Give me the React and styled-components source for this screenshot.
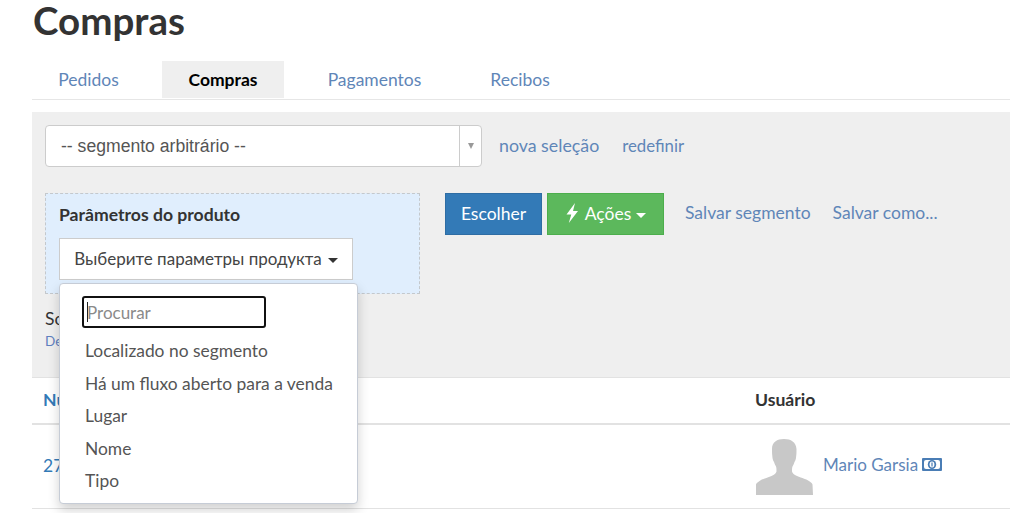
import React from "react";
import styled, { createGlobalStyle } from "styled-components";

const Global = createGlobalStyle`
  html, body {
    margin: 0;
    background: #fff;
    overflow: hidden;
  }
  body {
    font-family: Lato, "Open Sans", sans-serif;
    font-size: 17.5px;
    color: #333;
  }
  * { box-sizing: border-box; }
`;

const Page = styled.div`
  width: 1010px;
  height: 513px;
  padding-left: 32px;
  overflow: hidden;
`;

const Title = styled.h1`
  margin: 0;
  height: 61px;
  padding-left: 1px;
  font-size: 38.5px;
  line-height: 41px;
  font-weight: 700;
  color: #333;
`;

const Tabs = styled.nav`
  display: flex;
  height: 39px;
  border-bottom: 1px solid #e6e6e6;
`;

const Tab = styled.a`
  display: flex;
  align-items: center;
  justify-content: center;
  width: ${p => p.$width}px;
  margin-right: ${p => p.$gap || 0}px;
  height: 37px;
  font-size: 17.5px;
  color: ${p => (p.$active ? "#000" : "#5f86b8")};
  font-weight: ${p => (p.$active ? 700 : 400)};
  background: ${p => (p.$active ? "#efefef" : "transparent")};
`;

const Panel = styled.section`
  margin-top: 12px;
  height: 265px;
  padding: 13px;
  background: #efefef;
`;

const SegmentRow = styled.div`
  display: flex;
  align-items: center;
  height: 42px;
`;

const Select = styled.div`
  display: flex;
  align-items: stretch;
  width: 437px;
  height: 42px;
  background: #fff;
  border: 1px solid #ccc;
  border-radius: 4px;
`;

const SelectValue = styled.div`
  flex: 1;
  display: flex;
  align-items: center;
  padding-left: 15px;
  font-family: "Liberation Sans", Arial, sans-serif;
  font-size: 17.6px;
  color: #555;
`;

const SelectArrow = styled.div`
  width: 22px;
  display: flex;
  align-items: center;
  justify-content: center;
  border-left: 1px solid #ccc;

  &::after {
    content: "";
    border-top: 6px solid #999;
    border-left: 3.5px solid transparent;
    border-right: 3.5px solid transparent;
  }
`;

const TextLink = styled.a`
  margin-left: ${p => p.$gap}px;
  margin-bottom: 2px;
  font-size: ${p => p.$size || 17.5}px;
  color: #5f86b8;
  white-space: nowrap;
`;

const ActionLink = styled(TextLink)`
  line-height: 40px;
`;

const FilterRow = styled.div`
  display: flex;
  align-items: flex-start;
  margin-top: 26px;
`;

const ParamsBox = styled.div`
  position: relative;
  width: 375px;
  height: 101px;
  padding: 11px 13px;
  background: #e0eefd;
  border: 1px dashed #c4c8cc;
`;

const ParamsLabel = styled.div`
  font-size: 17.6px;
  line-height: 20px;
  font-weight: 700;
  color: #333;
`;

const Caret = styled.span`
  display: inline-block;
  margin-left: ${p => p.$gap || 6}px;
  vertical-align: middle;
  border-top: 5px solid ${p => p.$color || "#333"};
  border-left: 5px solid transparent;
  border-right: 5px solid transparent;
`;

const ParamsButton = styled.button`
  display: block;
  margin-top: 13px;
  width: 294px;
  height: 42px;
  padding: 0 0 2px;
  background: #fff;
  border: 1px solid #ccc;
  font: inherit;
  font-size: 17px;
  color: #444;
  white-space: nowrap;
`;

const Dropdown = styled.div`
  position: absolute;
  top: 89px;
  left: 13px;
  z-index: 5;
  width: 299px;
  height: 221px;
  padding: 12px 0 0 25px;
  background: #fff;
  border: 1px solid #c6ccd6;
  border-radius: 4px;
  box-shadow: 0 6px 12px rgba(0, 0, 0, 0.18);
`;

const SearchBox = styled.div`
  display: flex;
  align-items: center;
  width: 184px;
  height: 32px;
  margin-left: -3px;
  padding-left: 3px;
  border: 2px solid #111;
  border-radius: 3px;
  font-size: 17px;
  color: #8a8a8a;

  &::before {
    content: "";
    width: 1px;
    height: 20px;
    margin-right: -1px;
    background: #222;
  }
`;

const Options = styled.ul`
  margin: 7px 0 0;
  padding: 0;
  list-style: none;
`;

const Option = styled.li`
  height: 32.6px;
  line-height: 32.6px;
  font-size: 17.4px;
  color: #555;
  white-space: nowrap;
`;

const ActionButton = styled.button`
  display: flex;
  align-items: center;
  justify-content: center;
  gap: ${p => p.$inner || 0}px;
  width: ${p => p.$width}px;
  height: 42px;
  margin-left: ${p => p.$gap}px;
  padding: 0 0 2px;
  color: #fff;
  font: inherit;
  font-size: 17.5px;
  background: ${p => p.$bg};
  border: 1px solid ${p => p.$border};
`;

const Selection = styled.div`
  margin-top: 13px;
  font-size: 17.5px;
  line-height: 24px;
`;

const ClearLink = styled.a`
  display: block;
  font-size: 13.5px;
  line-height: 20px;
  color: #5f7fc0;
`;

const Row = styled.div`
  display: grid;
  grid-template-columns: 712px 1fr;
  align-items: center;
  height: ${p => p.$height}px;
  padding-left: 11px;
  border-top: ${p => p.$top || 0}px solid #e2e2e2;
  border-bottom: ${p => p.$line}px solid #e2e2e2;
`;

const HeadCell = styled.div`
  font-size: 17.6px;
  font-weight: 700;
  padding-bottom: 2px;
  color: ${p => p.$color || "#333"};
`;

const NumberCell = styled.a`
  font-size: 17.5px;
  padding-bottom: 3px;
  color: #337ab7;
`;

const UserCell = styled.div`
  display: flex;
  align-items: center;
  font-size: 17px;
  color: #5f86b8;
`;

const UserName = styled.span`
  margin: 0 4px 5px 9px;
`;

const MoneyWrap = styled.span`
  display: flex;
  margin-bottom: 5px;
`;

const Avatar = () => (
  <svg width="59" height="56" viewBox="0 0 59 56" fill="#c8c8c8">
    <path d="M29 0c-7 0-12 3-12 10 0 3 0 6 .5 9 .3 2 1 3 1.500 4 .5 1.500 1 3 2 4.500 .5 1 .5 3 .5 5-.5 2-2 3-5 4.500-5 2-10 3.500-12 5-2 1.500-3 2-3.500 3.500L1 56h57l-.5-10.500c-.5-1.500-1.500-2-3.500-3.500-2-1.500-7-3-12-5-3-1.500-4.500-2.500-5-4.500 0-2 0-4 .5-5 1-1.500 1.500-3 2-4.500 .5-1 1.200-2 1.500-4 .5-3 .5-6 .5-9C41 3 36 0 29 0z" />
  </svg>
);

const Bolt = () => (
  <svg width="14" height="20" viewBox="0 0 14 20" fill="#fff">
    <path d="M10 0 1.500 11.500h4.800L3.800 20 13 8H8z" />
  </svg>
);

const Money = () => (
  <svg width="20" height="13" viewBox="0 0 20 13">
    <rect width="20" height="13" rx="1" fill="#4a7db5" />
    <rect x="2" y="2" width="16" height="9" rx="2" fill="#fff" />
    <ellipse cx="10" cy="6.500" rx="4.200" ry="4.500" fill="#4a7db5" />
    <ellipse cx="10" cy="6.500" rx="2.400" ry="3" fill="#fff" />
    <rect x="9.400" y="4.500" width="1.200" height="4" fill="#4a7db5" />
  </svg>
);

const options = [
  "Localizado no segmento",
  "Há um fluxo aberto para a venda",
  "Lugar",
  "Nome",
  "Tipo",
];

const App = () => (
  <Page>
    <Global />
    <Title>Compras</Title>
    <Tabs>
      <Tab $width={113} $gap={17}>Pedidos</Tab>
      <Tab $width={122} $active>Compras</Tab>
      <Tab $width={181}>Pagamentos</Tab>
      <Tab $width={110}>Recibos</Tab>
    </Tabs>
    <Panel>
      <SegmentRow>
        <Select>
          <SelectValue>-- segmento arbitrário --</SelectValue>
          <SelectArrow />
        </Select>
        <TextLink $gap={17} $size={17.8}>nova seleção</TextLink>
        <TextLink $gap={23} $size={16.8}>redefinir</TextLink>
      </SegmentRow>
      <FilterRow>
        <ParamsBox>
          <ParamsLabel>Parâmetros do produto</ParamsLabel>
          <ParamsButton>
            Выберите параметры продукта<Caret />
          </ParamsButton>
          <Dropdown>
            <SearchBox>Procurar</SearchBox>
            <Options>
              {options.map(o => (
                <Option key={o}>{o}</Option>
              ))}
            </Options>
          </Dropdown>
        </ParamsBox>
        <ActionButton $width={97} $gap={25} $bg="#337ab7" $border="#2e6da4">Escolher</ActionButton>
        <ActionButton $width={117} $gap={5} $inner={6} $bg="#5cb85c" $border="#4cae4c">
          <Bolt /> <span>Ações<Caret $color="#fff" $gap={5} /></span>
        </ActionButton>
        <ActionLink $gap={21}>Salvar segmento</ActionLink>
        <ActionLink $gap={22}>Salvar como...</ActionLink>
      </FilterRow>
      <Selection>
        Soma
        <ClearLink>Desmarcar</ClearLink>
      </Selection>
    </Panel>
    <Row $height={48} $top={1} $line={2}>
      <HeadCell $color="#337ab7">Número</HeadCell>
      <HeadCell>Usuário</HeadCell>
    </Row>
    <Row $height={84} $line={1}>
      <NumberCell>2714</NumberCell>
      <UserCell>
        <Avatar />
        <UserName>Mario Garsia</UserName>
        <MoneyWrap><Money /></MoneyWrap>
      </UserCell>
    </Row>
  </Page>
);

export default App;
